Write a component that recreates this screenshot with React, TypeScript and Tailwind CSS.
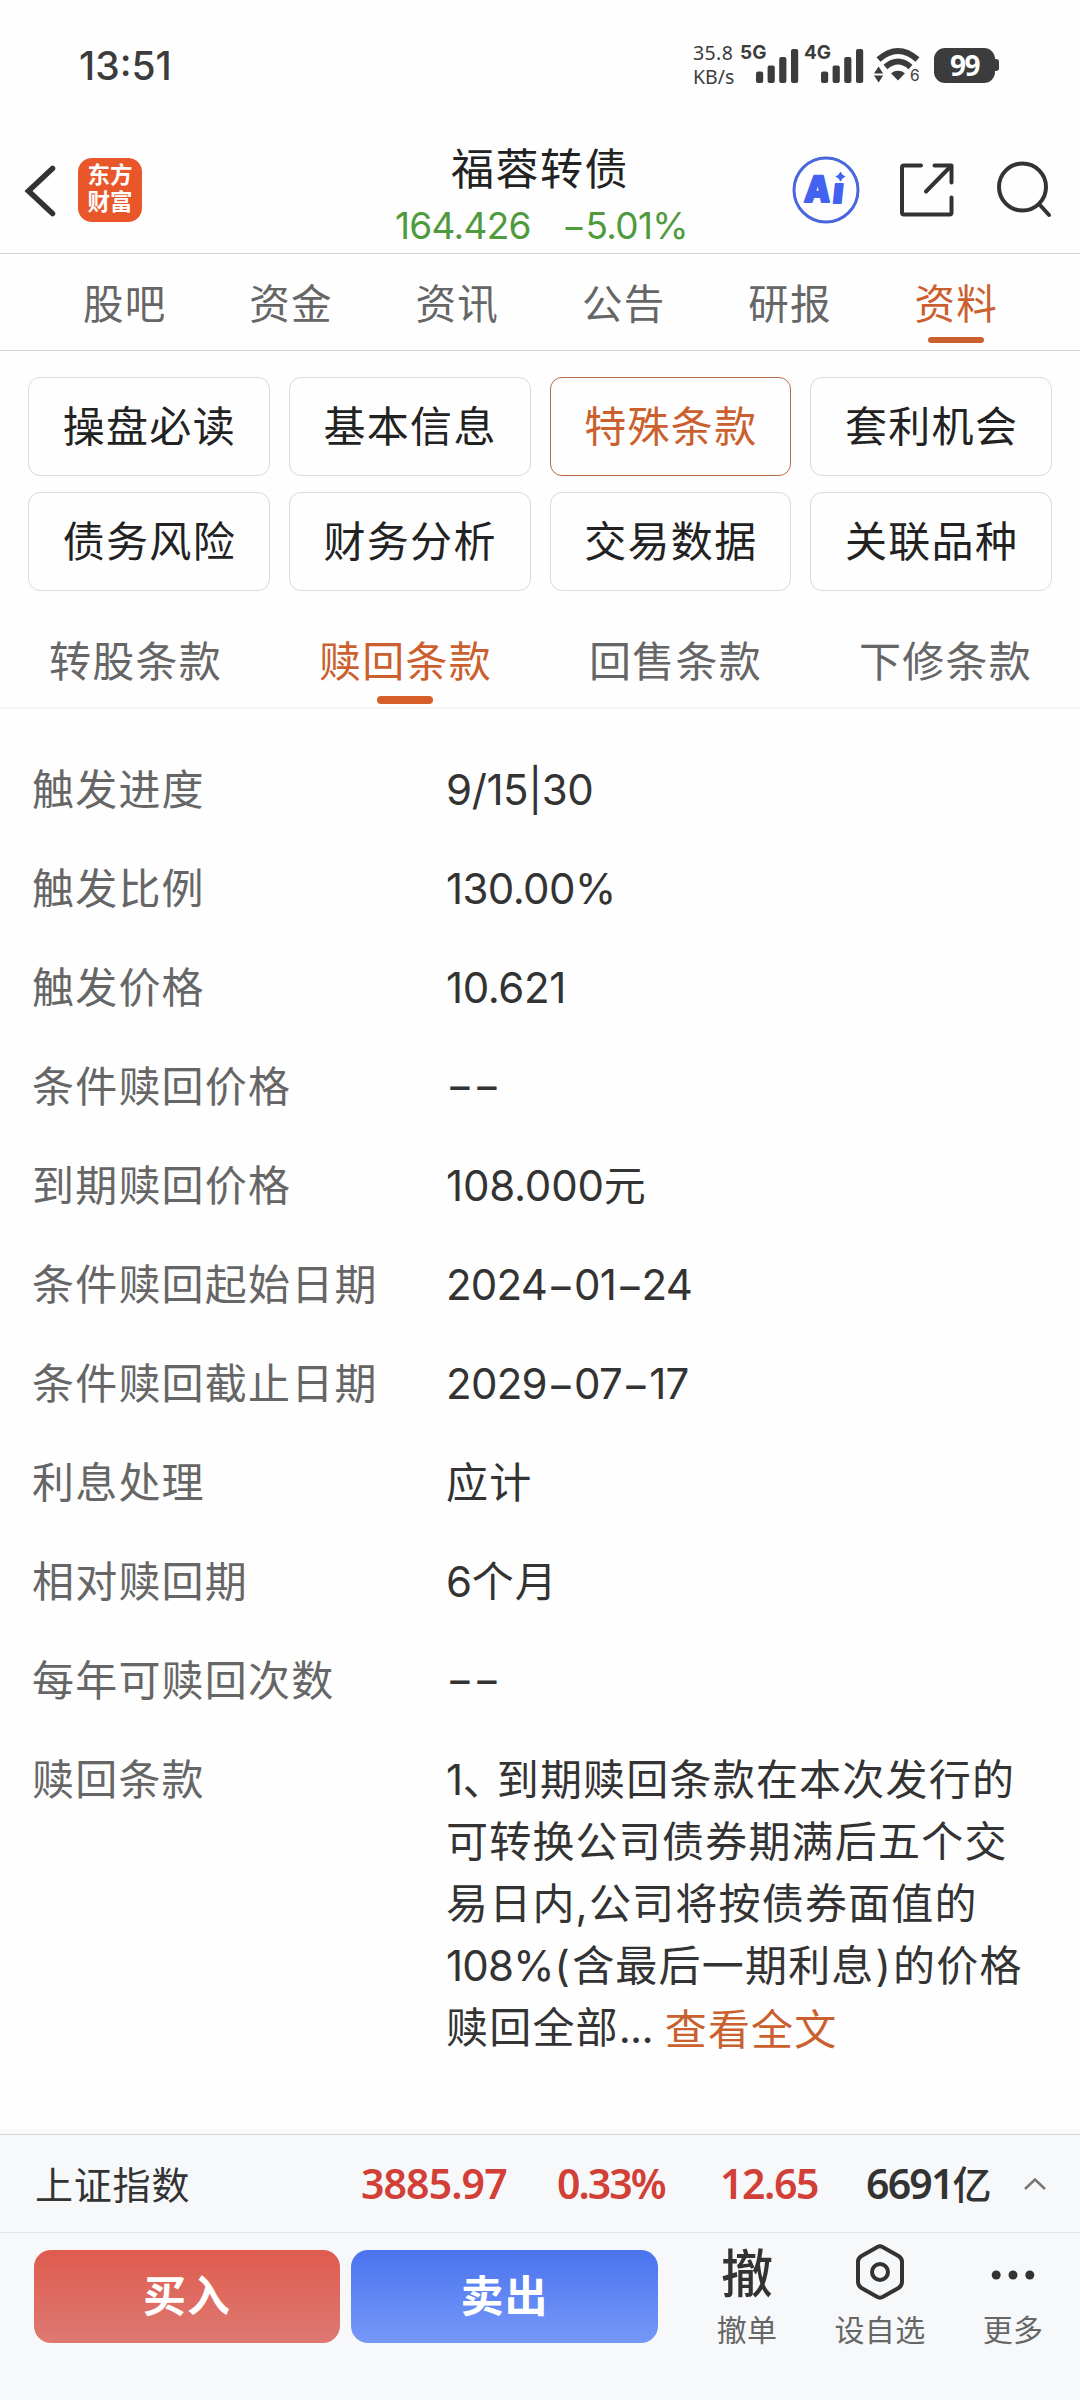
import { clsx } from "clsx";
import type { ReactNode } from "react";

const mainTabs = ["股吧", "资金", "资讯", "公告", "研报", "资料"];

const sections = [
  "操盘必读",
  "基本信息",
  "特殊条款",
  "套利机会",
  "债务风险",
  "财务分析",
  "交易数据",
  "关联品种",
];

const clauseTabs = ["转股条款", "赎回条款", "回售条款", "下修条款"];

type Row = { label: string; value: ReactNode };

const rows: Row[] = [
  { label: "触发进度", value: <Num>9/15|30</Num> },
  { label: "触发比例", value: <Num className="tracking-[-0.6px]">130.00%</Num> },
  { label: "触发价格", value: <Num>10.621</Num> },
  { label: "条件赎回价格", value: <Empty /> },
  { label: "到期赎回价格", value: <><Num className="tracking-[-0.2px]">108.000</Num>元</> },
  { label: "条件赎回起始日期", value: <Num className="tracking-[-0.8px]">2024−01−24</Num> },
  { label: "条件赎回截止日期", value: <Num className="tracking-[-0.7px]">2029−07−17</Num> },
  { label: "利息处理", value: "应计" },
  { label: "相对赎回期", value: <><Num>6</Num>个月</> },
  { label: "每年可赎回次数", value: <Empty /> },
];

function Num({ className = "tracking-[-0.4px]", children }: { className?: string; children: ReactNode }) {
  return <span className={className}>{children}</span>;
}

function Empty() {
  return <div className="pb-[4px] tracking-[-0.8px]">−−</div>;
}

function SignalBars() {
  return (
    <svg width="43" height="34" viewBox="0 0 43 34" fill="#3c3c3c">
      <rect x="0" y="22.5" width="7.2" height="11.5" rx="2" />
      <rect x="11.6" y="16.5" width="7.2" height="17.5" rx="2" />
      <rect x="23.2" y="8" width="7.2" height="26" rx="2" />
      <rect x="35" y="0" width="7.2" height="34" rx="2" />
    </svg>
  );
}

function WifiIcon() {
  return (
    <div className="flex w-[48px] items-end">
      <svg className="shrink-0" width="46" height="36" viewBox="0 0 46 36" fill="#3c3c3c">
        <path d="M4.5 12.5 Q24 -4.5 43.5 12.5" fill="none" stroke="#3c3c3c" strokeWidth="6" />
        <path d="M11.5 20 Q24 9 36.5 20" fill="none" stroke="#3c3c3c" strokeWidth="6" />
        <path d="M17 26.2 Q24 21.5 31 26.2 L24 33.5 Z" />
        <path d="M0 26.5 L4.6 19.5 L9.2 26.5 Z" />
        <path d="M0 28.5 L4.6 35.5 L9.2 28.5 Z" />
      </svg>
      <span className="-ml-[10px] text-[15.5px] leading-[14px]">6</span>
    </div>
  );
}

function StatusBar() {
  return (
    <div className="flex h-[130px] items-center pl-[79px] text-[#3c3c3c]">
      <div className="w-[614px] text-[39px] leading-none font-medium">13:51</div>
      <div className="w-[47px] font-['Noto_Sans'] text-[19.5px] leading-[24px]">
        <div className="tracking-[0.4px]">35.8</div>
        <div>KB/s</div>
      </div>
      <div className="flex h-[37px] w-[64px] items-start">
        <span className="-mt-[4px] w-[16px] text-[19px] leading-[19px] font-bold">5G</span>
        <span className="mt-[2px] shrink-0"><SignalBars /></span>
      </div>
      <div className="flex h-[37px] w-[70px] items-start">
        <span className="-mt-[4px] w-[17px] text-[19px] leading-[19px] font-bold">4G</span>
        <span className="mt-[2px] shrink-0"><SignalBars /></span>
      </div>
      <WifiIcon />
      <div className="ml-[12px] flex items-center">
        <div className="flex h-[35px] w-[61px] items-center justify-center rounded-[11px] bg-[#3c3c3c] font-['Noto_Sans'] text-[28px] leading-none font-bold tracking-[-1.5px] text-white">
          99
        </div>
        <div className="h-[12px] w-[4px] rounded-r-[3px] bg-[#3c3c3c]" />
      </div>
    </div>
  );
}

function Header() {
  return (
    <header className="flex h-[124px] border-b border-[#d6d6d6]">
      <svg className="mt-[33px] ml-[23px] shrink-0" width="36" height="56" viewBox="0 0 36 56" fill="none" stroke="#333" strokeWidth="5.5" strokeLinecap="round">
        <path d="M29.5 5.5 L5.5 28 L29.5 50.5" />
      </svg>
      <div className="mt-[28px] ml-[19px] flex h-[64px] w-[64px] shrink-0 flex-col items-center justify-center rounded-[14px] bg-[#e8562a] pb-[4px] text-[22.5px] leading-[27px] font-bold text-white">
        <span>东方</span>
        <span>财富</span>
      </div>
      <div className="ml-[217px] w-[362px] shrink-0 pt-[11px] text-center">
        <div className="text-[43px] leading-[56px] tracking-[1.5px] text-[#222]">福蓉转债</div>
        <div className="flex justify-between pr-[33px] pl-[36px] text-[37px] leading-[57px] tracking-[-0.7px] text-[#4f9a3d]">
          <span>164.426</span>
          <span>−5.01%</span>
        </div>
      </div>
      <svg className="mt-[26px] ml-[71px] shrink-0" width="68" height="68" viewBox="0 0 68 68">
        <circle cx="34" cy="34" r="32" fill="none" stroke="#4a66dc" strokeWidth="3" />
        <g fill="#4263f0" stroke="#4263f0" strokeWidth="2" strokeLinejoin="round" fontFamily="Inter" fontWeight="900">
          <text x="12" y="46" fontSize="36" transform="skewX(-4) translate(3 0)" textLength="26" lengthAdjust="spacingAndGlyphs">A</text>
          <text x="41" y="47" fontSize="35" transform="skewX(-6) translate(4 0)">ı</text>
        </g>
        <path d="M48.5 15.5 L50.5 18.7 L53.6 20.6 L50.5 22.5 L48.5 25.8 L46.5 22.5 L43.4 20.6 L46.5 18.7 Z" fill="#4263f0" />
      </svg>
      <svg className="mt-[31px] ml-[38px] shrink-0" width="58" height="58" viewBox="0 0 58 58" fill="none" stroke="#333" strokeWidth="4" strokeLinecap="round" strokeLinejoin="round">
        <path d="M23 4.5 H6 Q4 4.5 4 6.5 V51.5 Q4 53.5 6 53.5 H51.5 Q53.5 53.5 53.5 51.5 V36.5" />
        <path d="M36.5 4.5 H53.5 V21.5" />
        <path d="M28 30.5 L53 5" />
      </svg>
      <svg className="mt-[28px] ml-[38px] shrink-0" width="60" height="62" viewBox="0 0 60 62" fill="none" stroke="#333" strokeWidth="4" strokeLinecap="round">
        <circle cx="28.5" cy="29" r="23.5" />
        <path d="M45.5 46.5 L55 57" />
      </svg>
    </header>
  );
}

function MainTabs() {
  return (
    <nav className="grid h-[97px] grid-cols-6 border-b border-[#d6d6d6] px-[41px]">
      {mainTabs.map((tab) => {
        const active = tab === "资料";
        return (
          <div key={tab} className="flex flex-col items-center">
            <span
              className={clsx(
                "mt-[23px] pl-px text-[40.5px] leading-[56px] tracking-[1.2px]",
                active ? "text-[#cb602f]" : "text-[#666]",
              )}
            >
              {tab}
            </span>
            {active && <span className="mt-[4px] h-[6px] w-[56px] rounded-full bg-[#cb602f]" />}
          </div>
        );
      })}
    </nav>
  );
}

function SectionGrid() {
  return (
    <div className="grid grid-cols-4 gap-x-[19px] gap-y-[16px] px-[28px] pt-[26px]">
      {sections.map((name) => (
        <button
          key={name}
          className={clsx(
            "flex h-[99px] items-center justify-center rounded-[12px] border pl-px text-[42px] leading-none tracking-[1.3px]",
            name === "特殊条款" ? "border-[#b96b45] text-[#cb602f]" : "border-[#d8dadb] text-[#222]",
          )}
        >
          {name}
        </button>
      ))}
    </div>
  );
}

function ClauseTabs() {
  return (
    <nav className="grid h-[118px] grid-cols-4 border-b-2 border-[#f7f7f7]">
      {clauseTabs.map((tab) => {
        const active = tab === "赎回条款";
        return (
          <div key={tab} className="flex flex-col items-center">
            <span
              className={clsx(
                "mt-[43px] pl-px text-[42px] leading-[56px] tracking-[1.3px]",
                active ? "text-[#cb602f]" : "text-[#666]",
              )}
            >
              {tab}
            </span>
            {active && <span className="mt-[6px] h-[8px] w-[56px] rounded-[4px] bg-[#d65f29]" />}
          </div>
        );
      })}
    </nav>
  );
}

function Details() {
  return (
    <dl className="flex-1 pt-[31px] pl-[32px] text-[42px] tracking-[1.2px]">
      {rows.map((row) => (
        <div key={row.label} className="flex h-[99px] items-center leading-[62px]">
          <dt className="w-[414px] text-[#666]">{row.label}</dt>
          <dd className="text-[#333]">{row.value}</dd>
        </div>
      ))}
      <div className="flex pt-[19px] leading-[62px]">
        <dt className="w-[414px] text-[#666]">赎回条款</dt>
        <dd className="whitespace-nowrap text-[#333]">
          <div><Num>1</Num><span className="tracking-[-8px]">、</span>到期赎回条款在本次发行的</div>
          <div>可转换公司债券期满后五个交</div>
          <div>易日内,公司将按债券面值的</div>
          <div>
            <Num className="tracking-[-0.8px]">108%</Num>
            <span className="mx-px">(</span>含最后一期利息<span className="mx-px">)</span>的价格
          </div>
          <div className="flex">
            赎回全部<Num className="tracking-[-0.8px]">...</Num>
            <span className="mt-[2px] ml-[12px] text-[#cb602f]">查看全文</span>
          </div>
        </dd>
      </div>
    </dl>
  );
}

function IndexBar() {
  return (
    <div className="border-t-[5px] border-[#f8f8f8]">
      <div className="flex h-[99px] items-center border-t border-b border-t-[#d5d5d8] border-b-[#e3e4e8] pl-[35px] font-['Noto_Sans','Noto_Sans_CJK_SC',sans-serif] text-[41px] leading-none font-semibold text-[#d23f36]">
        <span className="w-[326px] pt-[2px] font-['Inter','Noto_Sans_CJK_SC',sans-serif] text-[38px] font-normal tracking-[0.8px] text-[#333]">上证指数</span>
        <span className="w-[196px] tracking-[-0.9px]">3885.97</span>
        <span className="w-[163px] tracking-[-2px]">0.33%</span>
        <span className="w-[146px] tracking-[-1.4px]">12.65</span>
        <span className="w-[157px] tracking-[-1.8px] text-[#333]">6691<span className="text-[39px] font-medium">亿</span></span>
        <svg width="24" height="14" viewBox="0 0 24 14" fill="none" stroke="#777" strokeWidth="2.5">
          <path d="M2 12 L12 2.5 L22 12" />
        </svg>
      </div>
    </div>
  );
}

function ActionItem({ label, className, children }: { label: string; className: string; children: ReactNode }) {
  return (
    <div className={clsx("flex flex-col items-center", className)}>
      <div className="flex h-[57px] items-center justify-center">{children}</div>
      <span className="mt-[11px] text-[30px] leading-[34px] tracking-[0.3px] whitespace-nowrap text-[#666]">{label}</span>
    </div>
  );
}

function ActionBar() {
  return (
    <footer className="flex h-[167px] pl-[34px]">
      <button className="mt-[17px] h-[93px] w-[306px] rounded-[17px] bg-linear-to-b from-[#df5b4e] to-[#dd7972] text-[43px] leading-none font-bold tracking-[1px] text-white">
        买入
      </button>
      <button className="mt-[17px] ml-[11px] h-[93px] w-[307px] rounded-[17px] bg-linear-to-b from-[#4a74ee] to-[#7698f8] text-[43px] leading-none font-bold tracking-[1px] text-white">
        卖出
      </button>
      <div className="mt-[12px] ml-[44px] flex">
        <ActionItem label="撤单" className="w-[90px]">
          <span className="mt-[2px] text-[52px] leading-none font-medium text-[#333]">撤</span>
        </ActionItem>
        <ActionItem label="设自选" className="ml-[33px] w-[110px]">
          <svg className="-mt-[4px]" width="50" height="56" viewBox="0 0 50 56" fill="none" stroke="#333" strokeWidth="4" strokeLinejoin="round">
            <path d="M22 3.2 Q25 1.5 28 3.2 L43.5 12 Q47 14 47 18 V38 Q47 42 43.5 44 L28 52.8 Q25 54.5 22 52.8 L6.5 44 Q3 42 3 38 V18 Q3 14 6.5 12 Z" />
            <circle cx="25" cy="28" r="8" />
          </svg>
        </ActionItem>
        <ActionItem label="更多" className="ml-[33px] w-[90px]">
          <svg className="mt-[3px]" width="46" height="12" viewBox="0 0 46 12" fill="#333">
            <circle cx="6.2" cy="6" r="4.5" />
            <circle cx="23" cy="6" r="4.5" />
            <circle cx="39.8" cy="6" r="4.5" />
          </svg>
        </ActionItem>
      </div>
    </footer>
  );
}

export default function App() {
  return (
    <div className="flex h-[2400px] w-[1080px] flex-col overflow-hidden bg-[#fefefe] font-['Inter','Noto_Sans_CJK_SC',sans-serif]">
      <StatusBar />
      <Header />
      <MainTabs />
      <SectionGrid />
      <ClauseTabs />
      <Details />
      <div className="bg-[#f7f8fa]">
        <IndexBar />
        <ActionBar />
      </div>
    </div>
  );
}
